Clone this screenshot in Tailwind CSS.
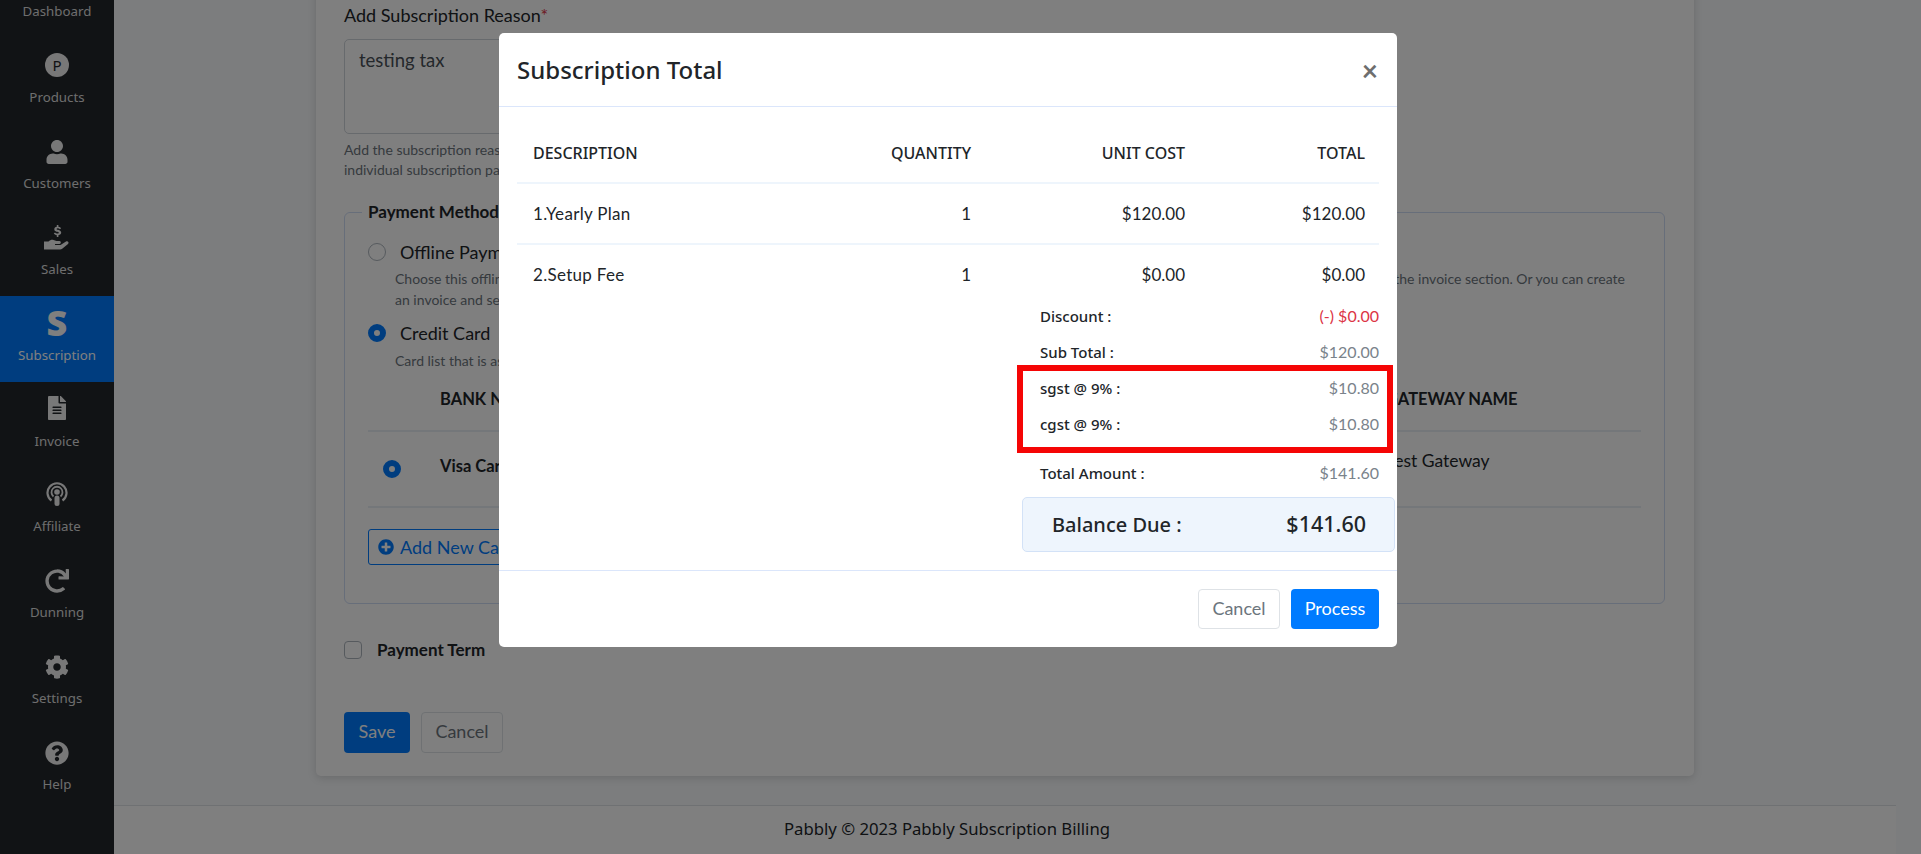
<!DOCTYPE html>
<html lang="en">
<head>
  <meta charset="UTF-8" />
  <title>Subscription Total</title>
  <script src="https://cdn.jsdelivr.net/npm/@tailwindcss/browser@4"></script>
</head>
<body class="overflow-hidden bg-[#f8fafc] font-['Lato','Noto_Sans',sans-serif] text-[#212529]">
<div class="relative flex h-[854px] w-[1921px] overflow-hidden">

  <!-- Sidebar -->
  <aside class="w-[114px] shrink-0 bg-[#23272b] font-['Noto_Sans',sans-serif] text-[13.3px] text-[#dcdcdc] -mt-[48px] h-[902px]">
    <a class="flex h-[86px] flex-col items-center justify-end pb-[18px]"><span class="leading-[18px]">Dashboard</span></a>
    <a class="flex h-[86px] flex-col items-center pt-[15px]">
      <svg class="h-[24px] w-[24px]" viewBox="0 0 24 24"><circle cx="12" cy="12" r="12" fill="#f0f0f0"/><text x="12" y="17.500" text-anchor="middle" font-size="15" font-family="Noto Sans" fill="#23272b">P</text></svg>
      <span class="mt-[11px] leading-[18px]">Products</span>
    </a>
    <a class="flex h-[86px] flex-col items-center pt-[16px]">
      <svg class="h-[24px] w-[22px]" viewBox="0 0 448 512" fill="#f0f0f0"><path d="M224 256c70.700 0 128-57.300 128-128S294.700 0 224 0 96 57.300 96 128s57.300 128 128 128zm89.600 32h-16.700c-22.200 10.200-46.900 16-72.900 16s-50.600-5.800-72.900-16h-16.700C60.200 288 0 348.200 0 422.400V464c0 26.500 21.500 48 48 48h352c26.500 0 48-21.500 48-48v-41.600c0-74.200-60.200-134.400-134.400-134.400z"/></svg>
      <span class="mt-[10px] leading-[18px]">Customers</span>
    </a>
    <a class="flex h-[86px] flex-col items-center pt-[15px]">
      <svg class="h-[25px] w-[26px]" viewBox="0 0 26 25" fill="#f0f0f0"><path d="M0 16.500h4.500c1.500-1.500 3.500-2 5-1.500l3 1h3c1.800 0 1.800 3 0 3h-4.500v1h5.500l5.500-3.500c1.800-1 3.500 1 2 2.500l-5.500 4.500c-.8.600-1.500 1-2.500 1H0z"/><path d="M12.800 0h1.600v1.700c1.300.2 2.200.8 2.700 1.500l-1.200 1.100c-.5-.6-1.200-1-2.100-1-.8 0-1.200.3-1.200.7 0 1.200 4.600.6 4.600 3.600 0 1.400-1 2.300-2.800 2.600V12h-1.600v-1.800c-1.400-.2-2.400-.8-3-1.700l1.200-1.100c.6.700 1.500 1.200 2.500 1.200.9 0 1.400-.3 1.400-.8 0-1.400-4.600-.6-4.600-3.600 0-1.300 1-2.300 2.500-2.500z"/></svg>
      <span class="mt-[10px] leading-[18px]">Sales</span>
    </a>
    <a class="flex h-[86px] flex-col items-center bg-[#007bff] text-white">
      <span class="mt-[5px] h-[44px] font-['Open_Sans',sans-serif] text-[36px] font-extrabold leading-[44px]">S</span>
      <span class="mt-[1px] leading-[18px]">Subscription</span>
    </a>
    <a class="flex h-[86px] flex-col items-center pt-[14px]">
      <svg class="h-[24px] w-[18px]" viewBox="0 0 384 512" fill="#f0f0f0"><path d="M224 136V0H24C10.700 0 0 10.700 0 24v464c0 13.300 10.700 24 24 24h336c13.300 0 24-10.700 24-24V160H248c-13.200 0-24-10.800-24-24zm64 236c0 6.600-5.400 12-12 12H108c-6.600 0-12-5.400-12-12v-8c0-6.600 5.400-12 12-12h168c6.600 0 12 5.400 12 12v8zm0-64c0 6.600-5.400 12-12 12H108c-6.600 0-12-5.400-12-12v-8c0-6.600 5.400-12 12-12h168c6.600 0 12 5.400 12 12v8zm0-72v8c0 6.600-5.400 12-12 12H108c-6.600 0-12-5.400-12-12v-8c0-6.600 5.400-12 12-12h168c6.600 0 12 5.400 12 12zm96-114.100v6.100H256V0h6.100c6.400 0 12.500 2.500 17 7l97.900 98c4.500 4.500 7 10.600 7 16.900z"/></svg>
      <span class="mt-[12px] leading-[18px]">Invoice</span>
    </a>
    <a class="flex h-[86px] flex-col items-center pt-[14px]">
      <svg class="h-[24px] w-[22px]" viewBox="0 0 22 24" fill="none" stroke="#f0f0f0"><path d="M5.500 18.500a9.500 9.500 0 1 1 11 0" stroke-width="2.200"/><path d="M7.500 14.500a5.500 5.500 0 1 1 7 0" stroke-width="1.800"/><circle cx="11" cy="10" r="2.800" fill="#f0f0f0" stroke="none"/><rect x="8.500" y="13.500" width="5" height="10.500" rx="2.500" fill="#f0f0f0" stroke="none"/></svg>
      <span class="mt-[11px] leading-[18px]">Affiliate</span>
    </a>
    <a class="flex h-[86px] flex-col items-center pt-[15px]">
      <svg class="h-[24px] w-[24px]" viewBox="0 0 512 512" fill="#f0f0f0"><path d="M500.330 0h-47.410a12 12 0 0 0-12 12.570l4 82.760A247.420 247.420 0 0 0 256 8C119.340 8 7.900 119.530 8 256.190 8.100 393.070 119.100 504 256 504a247.100 247.100 0 0 0 166.180-63.910 12 12 0 0 0 .48-17.430l-34-34a12 12 0 0 0-16.380-.55A176 176 0 1 1 402.100 157.800l-101.530-4.870a12 12 0 0 0-12.570 12v47.410a12 12 0 0 0 12 12h200.330a12 12 0 0 0 12-12V12a12 12 0 0 0-12-12z"/></svg>
      <span class="mt-[10px] leading-[18px]">Dunning</span>
    </a>
    <a class="flex h-[86px] flex-col items-center pt-[15px]">
      <svg class="h-[24px] w-[24px]" viewBox="0 0 512 512" fill="#f0f0f0"><path d="M487.400 315.700l-42.600-24.600c4.300-23.200 4.300-47 0-70.200l42.600-24.600c4.900-2.800 7.100-8.600 5.500-14-11.100-35.600-30-67.800-54.700-94.600-3.800-4.100-10-5.100-14.800-2.300L380.800 110c-17.900-15.400-38.500-27.300-60.800-35.100V25.800c0-5.600-3.900-10.500-9.400-11.700-36.700-8.200-74.300-7.800-109.200 0-5.500 1.200-9.400 6.100-9.400 11.700V75c-22.200 7.900-42.800 19.800-60.800 35.100L88.700 85.500c-4.900-2.800-11-1.900-14.800 2.300-24.700 26.700-43.600 58.900-54.700 94.600-1.700 5.400.6 11.200 5.500 14L67.300 221c-4.300 23.200-4.300 47 0 70.200l-42.600 24.600c-4.900 2.800-7.100 8.600-5.500 14 11.100 35.600 30 67.800 54.700 94.600 3.800 4.100 10 5.100 14.800 2.300l42.600-24.600c17.900 15.400 38.500 27.300 60.800 35.100v49.200c0 5.600 3.900 10.500 9.400 11.700 36.700 8.200 74.300 7.800 109.200 0 5.500-1.200 9.400-6.100 9.400-11.700v-49.200c22.200-7.900 42.800-19.800 60.800-35.100l42.600 24.600c4.900 2.800 11 1.900 14.800-2.300 24.700-26.700 43.600-58.900 54.700-94.600 1.500-5.500-.7-11.300-5.600-14.100zM256 336c-44.100 0-80-35.900-80-80s35.900-80 80-80 80 35.900 80 80-35.900 80-80 80z"/></svg>
      <span class="mt-[10px] leading-[18px]">Settings</span>
    </a>
    <a class="flex h-[86px] flex-col items-center pt-[15px]">
      <svg class="h-[24px] w-[24px]" viewBox="0 0 512 512" fill="#f0f0f0"><path d="M504 256c0 136.997-111.043 248-248 248S8 392.997 8 256C8 119.083 119.043 8 256 8s248 111.083 248 248zM262.655 90c-54.497 0-89.255 22.957-116.549 63.758-3.536 5.286-2.353 12.415 2.715 16.258l34.699 26.310c5.205 3.947 12.621 3.008 16.665-2.122 17.864-22.658 30.113-35.797 57.303-35.797 20.429 0 45.698 13.148 45.698 32.958 0 14.976-12.363 22.667-32.534 33.976C247.128 238.528 216 254.941 216 296v4c0 6.627 5.373 12 12 12h56c6.627 0 12-5.373 12-12v-1.333c0-28.462 83.186-29.647 83.186-106.667 0-58.002-60.165-102-116.531-102zM256 338c-25.365 0-46 20.635-46 46 0 25.364 20.635 46 46 46s46-20.636 46-46c0-25.365-20.635-46-46-46z"/></svg>
      <span class="mt-[10px] leading-[18px]">Help</span>
    </a>
  </aside>

  <!-- Page behind the modal -->
  <main class="flex h-full flex-1 flex-col">
    <div class="ml-[202px] -mt-[20px] h-[796px] w-[1378px] shrink-0 rounded-[5px] bg-white pl-[28px] pr-[29px] pt-[24px] shadow-[0_2px_8px_rgba(0,0,0,0.15)]">
      <label class="block text-[18px] leading-[22px]">Add Subscription Reason<span class="text-[#dc3545]">*</span></label>
      <div class="mt-[13px] h-[95px] w-[1000px] rounded-[5px] border border-[#ced4da] px-[14px] py-[8px] text-[18.500px] leading-[24px] text-[#495057]">testing tax</div>
      <p class="mt-[6px] text-[14px] leading-[20px] text-[#6c757d]">Add the subscription reason that will be shown on the<br />individual subscription page.</p>

      <fieldset class="mt-[20px] h-[404px] rounded-[6px] border border-[#cfdcf5] pl-[23px] pr-[23px]">
        <legend class="-ml-[6px] px-[6px] text-[17px] font-bold leading-[24px]">Payment Method</legend>
        <div class="mt-[16px] flex h-[24px] items-center gap-[14px]">
          <span class="h-[18px] w-[18px] rounded-full border border-[#adb5bd] bg-white"></span>
          <span class="text-[18px]">Offline Payment</span>
        </div>
        <p class="ml-[27px] mr-[16px] mt-[5px] flex justify-between text-[14px] leading-[20px] text-[#6c757d]"><span>Choose this offline payment option to record it manually.</span><span>the invoice section. Or you can create</span></p>
        <p class="ml-[27px] mt-[1px] text-[14px] leading-[20px] text-[#6c757d]">an invoice and send it to the customer.</p>
        <div class="mt-[11px] flex h-[24px] items-center gap-[14px]">
          <span class="h-[18px] w-[18px] rounded-full border-[6px] border-[#007bff] bg-white"></span>
          <span class="text-[18px]">Credit Card</span>
        </div>
        <p class="ml-[27px] mt-[6px] text-[14px] leading-[20px] text-[#6c757d]">Card list that is associated with the customer.</p>

        <div class="grid h-[61px] grid-cols-[72px_946px_1fr] items-center border-b-2 border-[#e9eef5] pb-[2px] text-[16.500px] font-bold">
          <span></span><span>BANK NAME</span><span>GATEWAY NAME</span>
        </div>
        <div class="grid h-[76px] grid-cols-[72px_946px_1fr] border-b-2 border-[#e9eef5] text-[16.500px]">
          <span class="ml-[15px] mt-[28px] h-[18px] w-[18px] rounded-full border-[6px] border-[#007bff] bg-white"></span>
          <span class="mt-[22px] font-bold">Visa Card</span>
          <span class="mt-[16px] text-[17.500px]">Test Gateway</span>
        </div>
        <div class="mt-[21px] inline-flex h-[36px] items-center gap-[6px] rounded-[3px] border border-[#007bff] pl-[9px] pr-[12px] text-[18px] text-[#007bff]">
          <svg class="h-[16px] w-[16px]" viewBox="0 0 512 512" fill="#007bff"><path d="M256 8C119 8 8 119 8 256s111 248 248 248 248-111 248-248S393 8 256 8zm144 276c0 6.600-5.400 12-12 12h-92v92c0 6.600-5.400 12-12 12h-56c-6.600 0-12-5.400-12-12v-92h-92c-6.600 0-12-5.400-12-12v-56c0-6.600 5.400-12 12-12h92v-92c0-6.600 5.400-12 12-12h56c6.600 0 12 5.400 12 12v92h92c6.600 0 12 5.400 12 12v56z"/></svg>
          Add New Card
        </div>
      </fieldset>

      <div class="mt-[34px] flex h-[24px] items-center gap-[15px]">
        <span class="h-[18px] w-[18px] rounded-[4px] border border-[#adb5bd] bg-white"></span>
        <span class="text-[17px] font-bold">Payment Term</span>
      </div>
      <div class="mt-[50px] flex gap-[11px] text-[18px]">
        <button class="h-[41px] w-[66px] rounded-[4px] bg-[#007bff] pb-[2px] text-white">Save</button>
        <button class="h-[41px] w-[82px] rounded-[4px] border border-[#dee2e6] pb-[2px] text-[#6c757d]">Cancel</button>
      </div>
    </div>

    <footer class="mr-[25px] mt-[29px] flex flex-1 items-center justify-center border-t border-[#dee2e6] bg-white pb-[3px] pr-[116px] font-['Noto_Sans',sans-serif] text-[16.700px]">
      Pabbly © 2023 Pabbly Subscription Billing
    </footer>
  </main>

  <!-- Backdrop -->
  <div class="absolute inset-0 bg-black/50"></div>

  <!-- Modal -->
  <div class="absolute left-[499px] top-[33px] h-[614px] w-[898px] rounded-[5px] bg-white">
    <div class="flex h-[74px] items-center justify-between border-b border-[#dbe6fb] pl-[18px] pr-[19px]">
      <h2 class="font-['Noto_Sans',sans-serif] text-[24px] font-medium">Subscription Total</h2>
      <span class="text-[28px] font-bold leading-none text-[#6e6e6e]">×</span>
    </div>

    <div class="px-[18px]">
      <div class="grid h-[77px] grid-cols-[284px_154px_214px_180px] items-center border-b-2 border-[#eef5fc] pl-[16px] pr-[14px] pt-[16px] font-['Noto_Sans',sans-serif] text-[16px] font-medium">
        <span>DESCRIPTION</span><span class="text-right">QUANTITY</span><span class="text-right">UNIT COST</span><span class="text-right">TOTAL</span>
      </div>
      <div class="grid h-[61px] grid-cols-[284px_154px_214px_180px] items-center border-b-2 border-[#eef5fc] pl-[16px] pr-[14px] text-[17px]">
        <span class="tracking-[0.3px]">1.Yearly Plan</span><span class="text-right">1</span><span class="text-right">$120.00</span><span class="text-right">$120.00</span>
      </div>
      <div class="grid h-[53px] grid-cols-[284px_154px_214px_180px] items-center pl-[16px] pr-[14px] pt-[6px] text-[17px]">
        <span class="tracking-[0.3px]">2.Setup Fee</span><span class="text-right">1</span><span class="text-right">$0.00</span><span class="text-right">$0.00</span>
      </div>

      <div class="ml-[523px] font-['Noto_Sans',sans-serif] text-[15px] font-medium">
        <div class="flex h-[36px] items-center justify-between"><span>Discount :</span><span class="font-['Lato',sans-serif] text-[16px] font-normal text-[#dc3545]">(-) $0.00</span></div>
        <div class="flex h-[36px] items-center justify-between"><span>Sub Total :</span><span class="font-['Lato',sans-serif] text-[16px] font-normal text-[#7a838b]">$120.00</span></div>
        <div class="flex h-[36px] items-center justify-between"><span>sgst @ 9% :</span><span class="font-['Lato',sans-serif] text-[16px] font-normal text-[#7a838b]">$10.80</span></div>
        <div class="flex h-[36px] items-center justify-between"><span>cgst @ 9% :</span><span class="font-['Lato',sans-serif] text-[16px] font-normal text-[#7a838b]">$10.80</span></div>
        <div class="mt-[13px] flex h-[36px] items-center justify-between"><span>Total Amount :</span><span class="font-['Lato',sans-serif] text-[16px] font-normal text-[#7a838b]">$141.60</span></div>
      </div>

      <div class="-mr-[16px] ml-[505px] mt-[6px] flex h-[55px] items-center justify-between rounded-[5px] border border-[#d3e2f7] bg-[#eef5fd] pl-[29px] pr-[28px] font-['Noto_Sans',sans-serif] text-[20px] font-medium">
        <span>Balance Due :</span><span class="text-[21.500px]">$141.60</span>
      </div>
    </div>

    <div class="mt-[18px] flex items-start justify-end gap-[11px] border-t border-[#dbe6fb] pr-[18px] pt-[18px] text-[18px]">
      <button class="h-[40px] w-[82px] rounded-[4px] border border-[#dee2e6] pb-[2px] text-[#6c757d]">Cancel</button>
      <button class="h-[40px] w-[88px] rounded-[4px] bg-[#007bff] pb-[2px] text-white">Process</button>
    </div>

    <!-- red annotation box around the tax rows -->
    <div class="absolute left-[518px] top-[332px] h-[88px] w-[376px] border-[6px] border-[#f50505]"></div>
  </div>
</div>
</body>
</html>
